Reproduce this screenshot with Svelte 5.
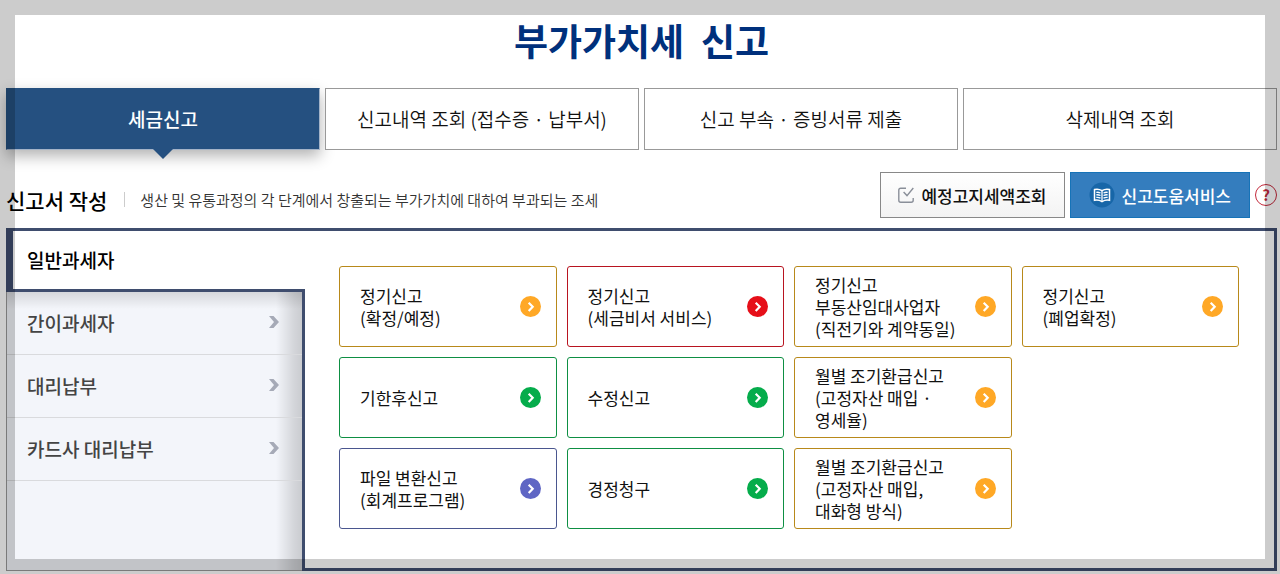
<script lang="ts">
  let activeTab = 0;
  let activeMenu = 0;

  const tabs = [
    '세금신고',
    '신고내역 조회 (접수증 · 납부서)',
    '신고 부속 · 증빙서류 제출',
    '삭제내역 조회'
  ];

  const menus = ['일반과세자', '간이과세자', '대리납부', '카드사 대리납부'];

  const cards = [
    { label: '정기신고\n(확정/예정)', color: 'orange' },
    { label: '정기신고\n(세금비서 서비스)', color: 'red' },
    { label: '정기신고\n부동산임대사업자\n(직전기와 계약동일)', color: 'orange' },
    { label: '정기신고\n(폐업확정)', color: 'orange' },
    { label: '기한후신고', color: 'green' },
    { label: '수정신고', color: 'green' },
    { label: '월별 조기환급신고\n(고정자산 매입 ·\n영세율)', color: 'orange' },
    null,
    { label: '파일 변환신고\n(회계프로그램)', color: 'blue' },
    { label: '경정청구', color: 'green' },
    { label: '월별 조기환급신고\n(고정자산 매입,\n대화형 방식)', color: 'orange' }
  ];
</script>

<main>
  <h1>부가가치세&nbsp; 신고</h1>

  <nav class="tabs">
    {#each tabs as tab, i}
      <button class="tab" class:active={activeTab === i} on:click={() => (activeTab = i)}>{tab}</button>
    {/each}
  </nav>

  <header class="toolbar">
    <div class="heading">
      <h2>신고서 작성</h2>
      <p>생산 및 유통과정의 각 단계에서 창출되는 부가가치에 대하여 부과되는 조세</p>
    </div>
    <div class="actions">
      <button class="action">
        <svg width="16" height="16" viewBox="0 0 16 16" fill="none" stroke="#8a8f99" stroke-width="1.4">
          <path d="M8 1.2H2.7Q.8 1.2.8 3V13.3Q.8 15.2 2.7 15.2H13.2Q15.2 15.2 15.2 13.3V11" />
          <path d="M5.6 5L9 8.6L15.3 1" />
        </svg>
        예정고지세액조회
      </button>
      <button class="action primary">
        <svg width="26" height="26" viewBox="0 0 26 26">
          <circle cx="13" cy="13" r="12.5" fill="#1766a8" />
          <path d="M5.5 7.5Q9.5 6.5 13 8.6Q16.5 6.5 20.5 7.5V18.3Q16.5 17.5 13 19.6Q9.5 17.5 5.5 18.3Z" fill="none" stroke="#fff" stroke-width="1.5" />
          <path d="M13 8.6V19.4M7.3 10.3Q9.5 10 11.5 11M7.3 12.8Q9.5 12.5 11.5 13.5M7.3 15.4Q9.5 15.1 11.5 16.1M18.7 10.3Q16.5 10 14.5 11M18.7 12.8Q16.5 12.5 14.5 13.5M18.7 15.4Q16.5 15.1 14.5 16.1" fill="none" stroke="#fff" stroke-width="1.3" />
        </svg>
        신고도움서비스
      </button>
      <button class="help" aria-label="도움말">?</button>
    </div>
  </header>

  <section class="panel">
    <aside>
      {#each menus as menu, i}
        <button class="menu" class:active={activeMenu === i} on:click={() => (activeMenu = i)}>
          {menu}
          {#if activeMenu !== i}
            <svg width="10" height="12" viewBox="0 0 10 12">
              <path d="M0 0H4.5L10 6L4.5 12H0L5 6Z" fill="#a6aab7" />
            </svg>
          {/if}
        </button>
      {/each}
    </aside>

    <div class="content">
      {#each cards as card}
        {#if card}
          <button class="card {card.color}">
            <span class="label">{card.label}</span>
            <svg width="21" height="21" viewBox="0 0 21 21">
              <circle cx="10.5" cy="10.5" r="10.5" fill="currentColor" />
              <path d="M8.7 6.7L12.7 10.8L8.7 14.9" fill="none" stroke="#fff" stroke-width="2.2" />
            </svg>
          </button>
        {:else}
          <div></div>
        {/if}
      {/each}
    </div>
  </section>
</main>

<div class="frame"></div>

<style>
  :global(body) {
    margin: 0;
    background: #fff;
    font-family: 'Noto Sans CJK KR', sans-serif;
  }

  main {
    padding: 15px 3px 3px 6px;
  }

  button {
    margin: 0;
    padding: 0;
    border: 0;
    background: #fff;
    color: #111;
    font-family: inherit;
    cursor: pointer;
  }

  svg {
    flex: none;
  }

  /* translucent edge drawn above the whole page */
  .frame {
    position: fixed;
    inset: 0;
    z-index: 10;
    border: 15px solid rgba(0, 0, 0, 0.2);
    pointer-events: none;
  }

  h1 {
    margin: 0 0 23px;
    color: #00307c;
    font-size: 37px;
    font-weight: 700;
    line-height: 50px;
    text-align: center;
  }

  .tabs {
    display: grid;
    grid-template-columns: repeat(4, 1fr);
    gap: 5px;
  }

  .tab {
    position: relative;
    height: 62px;
    padding-bottom: 2px;
    border: 1px solid #999;
    font-size: 19px;
    font-weight: 350;
  }

  .tab.active {
    border-color: #a4b3c8;
    border-top-color: #25507f;
    border-left-color: #25507f;
    background: #255080;
    color: #fff;
    font-weight: 500;
    box-shadow: 0 6px 14px rgba(0, 0, 0, 0.3);
  }

  .tab.active::after {
    content: '';
    position: absolute;
    top: 100%;
    left: 50%;
    border: 10px solid transparent;
    border-top-color: #255080;
    border-bottom-width: 0;
    transform: translateX(-50%);
  }

  .toolbar {
    display: flex;
    justify-content: space-between;
    padding: 22px 0 10px;
  }

  .heading {
    display: flex;
    align-items: center;
    padding-top: 10px;
  }

  h2 {
    margin: 0;
    color: #000;
    font-size: 21px;
    font-weight: 500;
    line-height: 30px;
  }

  .heading p {
    margin: 0 0 2px 17px;
    padding-left: 15px;
    border-left: 1px solid #ccc;
    color: #333;
    font-size: 15px;
    font-weight: 350;
    line-height: 15px;
  }

  .actions {
    display: flex;
    align-items: center;
    gap: 5px;
  }

  .action {
    display: flex;
    align-items: center;
    gap: 7px;
    height: 46px;
    padding: 0 17px;
    border: 1px solid #888;
    background: linear-gradient(#fff, #f3f3f3);
    font-size: 17px;
    font-weight: 500;
  }

  .primary {
    padding: 0 18px;
    border-color: #1673b8;
    background: #347dbe;
    color: #fff;
  }

  .help {
    width: 22px;
    height: 22px;
    border: 1px solid #c42a3c;
    border-radius: 50%;
    background: none;
    color: #c42a3c;
    font-size: 15px;
    font-weight: 700;
    line-height: 18px;
  }

  .panel {
    display: flex;
    border-top: 3px solid #3f4d6e;
  }

  aside {
    flex: 0 0 296px;
    box-sizing: border-box;
    border: solid #999;
    border-width: 0 0 1px 1px;
    background:
      linear-gradient(to left, rgba(0, 0, 0, 0.17), rgba(0, 0, 0, 0.13) 8px, transparent 26px),
      linear-gradient(transparent 60px, rgba(0, 0, 0, 0.12) 61px, transparent 78px),
      #f3f5fa;
  }

  .menu {
    display: flex;
    align-items: center;
    justify-content: space-between;
    width: 100%;
    height: 63px;
    padding: 0 23px 2px 20px;
    border-bottom: 1px solid #d9dadd;
    background: none;
    color: #444;
    font-size: 19px;
    font-weight: 500;
  }

  .menu.active {
    position: relative;
    z-index: 1;
    width: calc(100% + 4px);
    height: 61px;
    margin-left: -1px;
    padding-left: 14px;
    border-left: 7px solid #3f4d6e;
    border-bottom: 3px solid #3f4d6e;
    background: #fff;
    color: #000;
  }

  .content {
    flex: 1;
    display: grid;
    grid-template-columns: repeat(4, 1fr);
    gap: 10px;
    padding: 35px 35px 39px 34px;
    border: solid #3f4d6e;
    border-width: 0 3px 3px;
  }

  .card {
    display: flex;
    align-items: center;
    justify-content: space-between;
    min-height: 81px;
    padding: 0 15px 0 20px;
    border: 1px solid;
    border-radius: 3px;
    font-size: 17px;
    font-weight: 400;
    line-height: 22px;
    text-align: left;
  }

  .label {
    white-space: pre-line;
  }

  .orange {
    border-color: #b8891a;
  }

  .orange svg {
    color: #ffa826;
  }

  .red {
    border-color: #b81420;
  }

  .red svg {
    color: #e60f19;
  }

  .green {
    border-color: #0e8f43;
  }

  .green svg {
    color: #05ac4b;
  }

  .blue {
    border-color: #4a568f;
  }

  .blue svg {
    color: #5f66c4;
  }
</style>
